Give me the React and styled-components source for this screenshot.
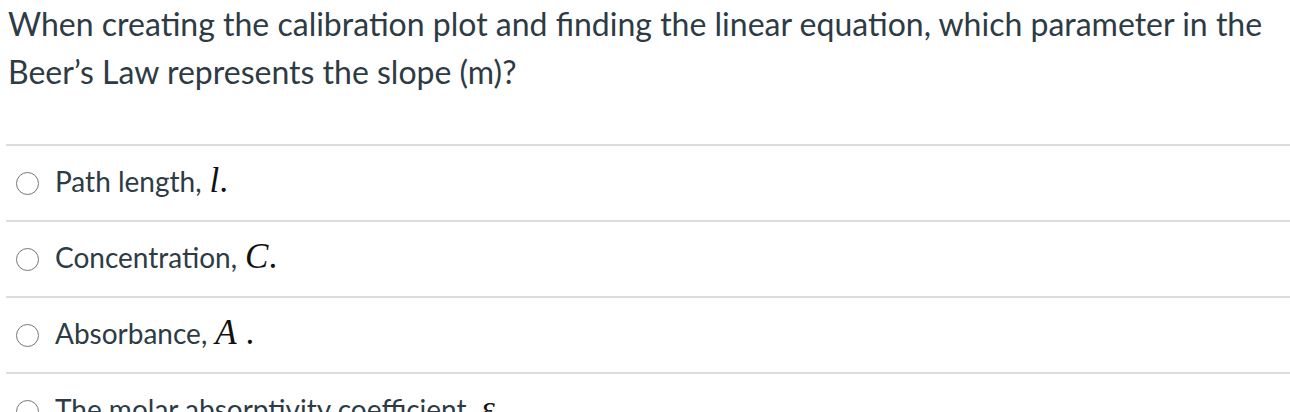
import styled, { createGlobalStyle } from 'styled-components';

const GlobalStyle = createGlobalStyle`
  html, body {
    margin: 0;
    padding: 0;
    background: #fff;
  }
  body {
    font-family: Lato, "Open Sans", sans-serif;
    color: #2d3b45;
  }
`;

const answers = [
  { label: 'Path length,', symbol: 'l', dot: '.' },
  { label: 'Concentration,', symbol: 'C', dot: '.' },
  { label: 'Absorbance,', symbol: 'A', dot: ' .' },
  { label: 'The molar absorptivity coefficient,', symbol: 'ε', dot: '.' }
];

const Page = styled.div`
  width: 1290px;
  height: 412px;
  overflow: hidden;
  padding: 0 0 0 6px;
  box-sizing: border-box;
`;

const Question = styled.p`
  margin: 0 0 48px;
  padding-left: 2px;
  font-size: 32px;
  line-height: 48px;
`;

const AnswerList = styled.div`
  display: flex;
  flex-direction: column;
`;

const Answer = styled.label`
  display: flex;
  align-items: center;
  gap: 16px;
  height: 76px;
  box-sizing: border-box;
  padding: 0 0 5px 10px;
  border-top: 2px solid #dcdcdc;
  font-size: 28px;
`;

const Radio = styled.span`
  width: 21px;
  height: 21px;
  margin-top: 5px;
  border: 1.6px solid #767676;
  border-radius: 50%;
  flex-shrink: 0;
`;

const Math = styled.span`
  font-family: "Liberation Serif", "DejaVu Serif", serif;
  font-style: italic;
  font-size: 35px;
  color: #111;
  margin-left: 8px;
`;

const Dot = styled.span`
  font-family: "Liberation Serif", serif;
  font-size: 35px;
  color: #111;
  white-space: pre;
`;

function App() {
  return (
    <Page>
      <GlobalStyle />
      <Question>
        When creating the calibration plot and finding the linear equation, which parameter in the
        Beer’s Law represents the slope (m)?
      </Question>
      <AnswerList>
        {answers.map((a) => (
          <Answer key={a.label}>
            <Radio />
            <span>
              {a.label}
              <Math>{a.symbol}</Math>
              <Dot>{a.dot}</Dot>
            </span>
          </Answer>
        ))}
      </AnswerList>
    </Page>
  );
}

export default App;
